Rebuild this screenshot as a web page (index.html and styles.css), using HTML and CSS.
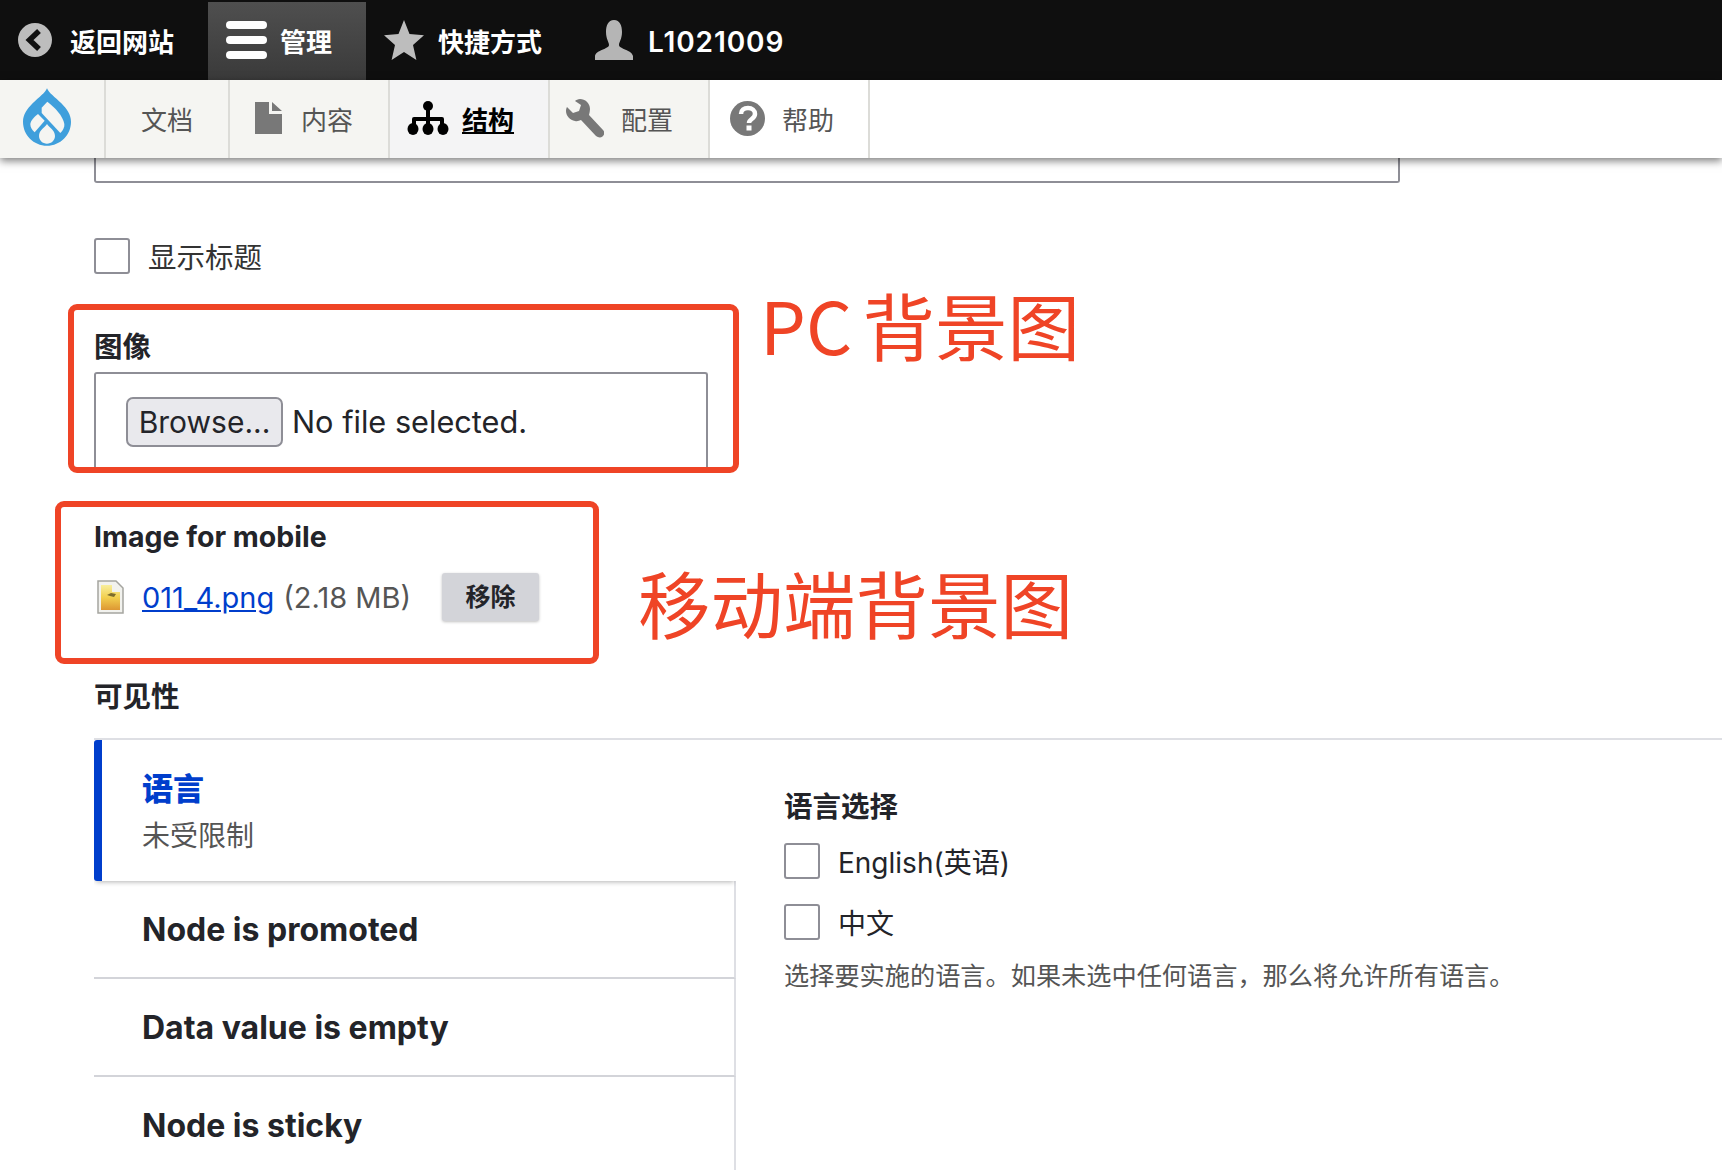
FILE: index.html
```html
<!DOCTYPE html>
<html lang="zh-CN">
<head>
    <meta charset="UTF-8">
    <title>Block layout</title>
    <link rel="stylesheet" href="styles.css">
</head>
<body>
    <header class="toolbar">
        <a class="bar-item back-item">
            <svg class="bar-icon" viewBox="0 0 34 34"><circle cx="17" cy="17" r="17" fill="#bdbdbd"/><path d="M21 8 L11.500 17 L21 26" fill="none" stroke="#111" stroke-width="5.500"/></svg>
            返回网站
        </a>
        <a class="bar-item manage-item">
            <svg class="menu-icon" viewBox="0 0 41 38"><rect width="41" height="8" rx="4" fill="#fff"/><rect y="15" width="41" height="8" rx="4" fill="#fff"/><rect y="30" width="41" height="8" rx="4" fill="#fff"/></svg>
            管理
        </a>
        <a class="bar-item star-item">
            <svg class="star-icon" viewBox="0 0 40 40"><path d="M20 0 L25.500 14 L40 15.300 L29 25 L32.400 40 L20 32 L7.600 40 L11 25 L0 15.300 L14.500 14 Z" fill="#bdbdbd"/></svg>
            快捷方式
        </a>
        <a class="bar-item user-item">
            <svg class="star-icon" viewBox="0 0 40 40"><path d="M20 0 C26 0 28 6 28 12 C28 19 25 22 25 25 C25 29 38 30 39 36 L39 40 L1 40 L1 36 C2 30 15 29 15 25 C15 22 12 19 12 12 C12 6 14 0 20 0 Z" fill="#b5b5b5"/></svg>
            <span class="user-name">L1021009</span>
        </a>
    </header>

    <nav class="tray">
        <a class="tray-item logo-item">
            <svg class="drupal-logo" viewBox="0 0 144 172">
                <path d="M72 0 C78 15 95 25 115 45 C132 62 144 80 144 100 C144 140 112 172 72 172 C32 172 0 140 0 100 C0 80 12 62 29 45 C49 25 66 15 72 0 Z" fill="#3f9fdc"/>
                <path d="M56 58 L73 40 C95 57 120 82 124 107 C125 117 120 127 112 134 L56 74 Z" fill="#f5f5f2"/>
                <path d="M22 107 C24 95 35 85 45 77 L65 97 L35 132 C27 125 22 117 22 107 Z" fill="#f5f5f2"/>
                <path d="M72 107 C78 117 96 125 96 143 C96 156 85 166 72 166 C59 166 48 156 48 143 C48 125 66 117 72 107 Z" fill="#f5f5f2"/>
            </svg>
        </a>
        <a class="tray-item docs-item">文档</a>
        <a class="tray-item content-item">
            <svg class="file-icon" viewBox="0 0 27 32"><path d="M0 0 H14 V12 H27 V32 H0 Z M17 0 L27 9 H17 Z" fill="#787878"/></svg>
            内容
        </a>
        <a class="tray-item active-item">
            <svg class="tree-icon" viewBox="0 0 42 34"><g fill="#000"><circle cx="21" cy="5" r="5"/><rect x="19" y="6" width="4" height="14"/><path d="M7 16 H35 Q37 16 37 18 V26 H33 V20 H23 V26 H19 V20 H9 V26 H5 V18 Q5 16 7 16 Z"/><ellipse cx="6" cy="28" rx="5.500" ry="6"/><ellipse cx="21" cy="28" rx="5.500" ry="6"/><ellipse cx="36" cy="28" rx="5.500" ry="6"/></g></svg>
            <span class="active-label">结构</span>
        </a>
        <a class="tray-item config-item">
            <svg class="wrench-icon" viewBox="0 0 38 39"><path d="M14 0 C19 0 24 4 24 10 C24 12 23.500 14 23 16 L37 31 C39 33 38.500 36 36.500 37.500 C34.500 39 32 38.500 30 37 L15 21 C13 22 11 22.500 9 22 C4 21 0 17 0 12 C0 10 0.500 9 1 8 L7 14 L13 12 L15 6 L9 2 C10 1 12 0 14 0 Z" fill="#787878"/></svg>
            配置
        </a>
        <a class="tray-item help-item">
            <svg class="help-icon" viewBox="0 0 35 35"><circle cx="17.500" cy="17.500" r="17.500" fill="#787878"/><path d="M11 13 C11 9 14 7 18 7 C22 7 25 9.500 25 13 C25 18 19 18 19 22" fill="none" stroke="#fff" stroke-width="4.500"/><rect x="16.500" y="24.500" width="5" height="5" fill="#fff"/></svg>
            帮助
        </a>
    </nav>

    <main class="page">
        <div class="cut-input"></div>

        <label class="check-row title-check">
            <span class="checkbox"></span>
            <span>显示标题</span>
        </label>

        <h2 class="field-label image-label">图像</h2>
        <div class="file-box">
            <span class="browse-btn">Browse...</span>
            <span class="no-file">No file selected.</span>
        </div>

        <h2 class="field-label mobile-label">Image for mobile</h2>
        <div class="file-row">
            <svg class="png-icon" viewBox="0 0 27 34">
                <defs>
                    <linearGradient id="pngFill" x1="0" y1="0" x2="0" y2="1">
                        <stop offset="0" stop-color="#f8ee9c"/>
                        <stop offset="0.5" stop-color="#f2cf4e"/>
                        <stop offset="1" stop-color="#dd9733"/>
                    </linearGradient>
                </defs>
                <path d="M1 1 H19 L26 8 V33 H1 Z" fill="#f2f2ee" stroke="#a5a5a0" stroke-width="1.500"/>
                <path d="M4 5 H15 V12 H23 V30 H4 Z" fill="url(#pngFill)"/>
                <path d="M10 15 L14 13 L19 14 L17 17 L13 16 Z" fill="#7d6c2c"/>
            </svg>
            <a class="file-link">011_4.png</a>
            <span class="file-size">(2.18 MB)</span>
            <span class="remove-btn">移除</span>
        </div>

        <h2 class="field-label visibility-label">可见性</h2>
        <section class="vtabs">
            <div class="vtab-menu">
                <div class="vtab vtab-selected">
                    <strong class="vtab-title">语言</strong>
                    <span class="vtab-summary">未受限制</span>
                </div>
                <div class="vtab">Node is promoted</div>
                <div class="vtab">Data value is empty</div>
                <div class="vtab vtab-last">Node is sticky</div>
            </div>
            <div class="vtab-pane">
                <h3 class="field-label pane-title">语言选择</h3>
                <label class="check-row lang-check">
                    <span class="checkbox"></span>
                    <span class="lang-name">English(英语)</span>
                </label>
                <label class="check-row lang-check">
                    <span class="checkbox"></span>
                    <span class="lang-name">中文</span>
                </label>
                <p class="pane-help">选择要实施的语言。如果未选中任何语言&#65292;那么将允许所有语言。</p>
            </div>
        </section>
    </main>

    <!-- red markup drawn over the screenshot -->
    <div class="mark mark-pc"></div>
    <div class="mark mark-mobile"></div>
    <div class="mark-text mark-text-pc">PC 背景图</div>
    <div class="mark-text mark-text-mobile">移动端背景图</div>
</body>
</html>
```

FILE: styles.css
```css
body {
    margin: 0;
    height: 1170px;
    overflow: hidden;
    position: relative;
    background-color: #fff;
    color: #232429;
    font-family: Inter, "Noto Sans CJK SC", sans-serif;
}

a {
    color: inherit;
    text-decoration: none;
}

.toolbar {
    display: flex;
    height: 80px;
    background-color: #0f0f0f;
    color: #fff;
    font-size: 26px;
    font-weight: 700;
}

.bar-item {
    display: flex;
    align-items: center;
    box-sizing: border-box;
}

.back-item {
    width: 208px;
    padding-left: 18px;
    gap: 18px;
}

.bar-icon {
    width: 34px;
    height: 34px;
}

.manage-item {
    width: 158px;
    margin-top: 2px;
    padding: 0 0 2px 18px;
    gap: 13px;
    background: linear-gradient(#4f4f4f, #3a3a3a);
}

.menu-icon {
    width: 41px;
    height: 38px;
}

.star-item {
    width: 210px;
    padding-left: 18px;
    gap: 14px;
}

.user-item {
    padding-left: 18px;
    gap: 14px;
}

.star-icon {
    width: 40px;
    height: 40px;
}

.user-name {
    padding-top: 3px;
    font-weight: 600;
    font-size: 28px;
    letter-spacing: 0.9px;
}

.tray {
    position: relative;
    z-index: 2;
    display: flex;
    height: 78px;
    background-color: #fff;
    box-shadow: 0 3px 8px rgba(0, 0, 0, 0.5);
    color: #555;
    font-size: 26px;
}

.tray-item {
    display: flex;
    align-items: center;
    box-sizing: border-box;
    width: 160px;
    padding-bottom: 2px;
    background-color: #f5f5f2;
    border-right: 2px solid #dcdcd8;
}

.logo-item {
    width: 106px;
    padding: 0 0 5px 23px;
}

.drupal-logo {
    width: 48px;
    height: 58px;
}

.docs-item {
    width: 124px;
    padding-left: 35px;
}

.content-item {
    padding-left: 25px;
    gap: 19px;
}

.file-icon {
    width: 27px;
    height: 32px;
}

.active-item {
    padding-left: 17px;
    gap: 13px;
    background-color: #f4f4f5;
    color: #000;
}

.tree-icon {
    width: 42px;
    height: 34px;
}

.active-label {
    font-weight: 700;
    text-decoration: underline;
}

.config-item {
    padding-left: 16px;
    gap: 17px;
}

.wrench-icon {
    width: 38px;
    height: 39px;
}

.help-item {
    padding-left: 20px;
    gap: 17px;
    background-color: #fff;
}

.help-icon {
    width: 35px;
    height: 35px;
}

.page {
    padding-left: 94px;
}

.cut-input {
    box-sizing: border-box;
    width: 1306px;
    height: 25px;
    border: 2px solid #8e8e96;
    border-top: none;
    border-radius: 0 0 3px 3px;
}

.check-row {
    display: flex;
    align-items: center;
    gap: 18px;
}

.checkbox {
    box-sizing: border-box;
    width: 36px;
    height: 36px;
    border: 2px solid #8e8e96;
    border-radius: 3px;
    background-color: #fff;
}

.title-check {
    margin-top: 52px;
    font-size: 28.5px;
    color: #333;
}

.field-label {
    margin: 0;
    font-size: 28.5px;
    font-weight: 700;
    line-height: 36px;
}

.image-label {
    margin-top: 53px;
}

.file-box {
    box-sizing: border-box;
    display: flex;
    align-items: flex-start;
    gap: 9px;
    width: 614px;
    height: 96px;
    margin-top: 7px;
    padding: 23px 0 0 30px;
    border: 2px solid #8e8e96;
    border-bottom: none;
    border-radius: 3px 3px 0 0;
    font-size: 30.7px;
    line-height: 50px;
}

.browse-btn {
    box-sizing: border-box;
    width: 157px;
    height: 50px;
    border: 2px solid #8e8e96;
    border-radius: 7px;
    background-color: #e9e9ed;
    font-size: 30px;
    line-height: 46px;
    text-align: center;
}

.mobile-label {
    margin-top: 51px;
}

.file-row {
    display: flex;
    align-items: center;
    height: 48px;
    margin-top: 18px;
    font-size: 29px;
    color: #555;
}

.png-icon {
    width: 27px;
    height: 34px;
    margin-left: 3px;
}

.file-link {
    margin-left: 18px;
    color: #003ecc;
    text-decoration: underline;
}

.file-size {
    margin-left: 9px;
}

.remove-btn {
    width: 97px;
    height: 48px;
    margin-left: 31px;
    border-radius: 3px;
    background-color: #d3d4d9;
    box-shadow: 0 1px 3px rgba(0, 0, 0, 0.25);
    color: #232429;
    font-size: 25px;
    font-weight: 700;
    line-height: 48px;
    text-align: center;
}

.visibility-label {
    margin-top: 58px;
}

.vtabs {
    display: flex;
    margin-top: 23px;
    border-top: 2px solid #dedfe4;
}

.vtab-menu {
    width: 642px;
    flex-shrink: 0;
}

.vtab {
    box-sizing: border-box;
    height: 98px;
    padding: 29px 0 0 48px;
    border-right: 2px solid #dedfe4;
    border-bottom: 2px solid #d3d4d9;
    font-size: 32px;
    font-weight: 700;
    line-height: 40px;
}

.vtab-selected {
    display: flex;
    flex-direction: column;
    height: 141px;
    padding: 29px 0 0 40px;
    border-left: 8px solid #003ecc;
    border-right: none;
    border-bottom: none;
    border-radius: 3px 0 0 3px;
    background-color: #fff;
    box-shadow: 0 3px 5px -2px rgba(0, 0, 0, 0.3);
    clip-path: inset(0 0 -10px 0);
}

.vtab-title {
    color: #003ecc;
    font-size: 31px;
}

.vtab-summary {
    margin-top: 7px;
    color: #555;
    font-size: 28px;
    font-weight: 400;
}

.vtab-last {
    height: 93px;
    border-bottom: none;
}

.vtab-pane {
    padding: 49px 0 0 48px;
}

.pane-title {
    font-size: 28.5px;
}

.lang-check {
    height: 36px;
    margin-top: 18px;
    font-size: 28px;
}

.lang-check + .lang-check {
    margin-top: 25px;
}

.pane-help {
    margin: 16px 0 0;
    color: #555;
    font-size: 25.2px;
}

/* annotations */
.mark {
    position: absolute;
    box-sizing: border-box;
    border: 6px solid #ef4426;
    border-radius: 9px;
}

.mark-pc {
    left: 68px;
    top: 304px;
    width: 671px;
    height: 169px;
}

.mark-mobile {
    left: 55px;
    top: 501px;
    width: 544px;
    height: 163px;
}

.mark-text {
    position: absolute;
    color: #ef4426;
    font-family: "Noto Sans CJK SC", sans-serif;
    font-size: 72.5px;
    font-weight: 400;
    line-height: 80px;
    white-space: nowrap;
}

.mark-text-pc {
    left: 760px;
    top: 284px;
    word-spacing: -6px;
}

.mark-text-mobile {
    left: 638px;
    top: 562px;
}
```
